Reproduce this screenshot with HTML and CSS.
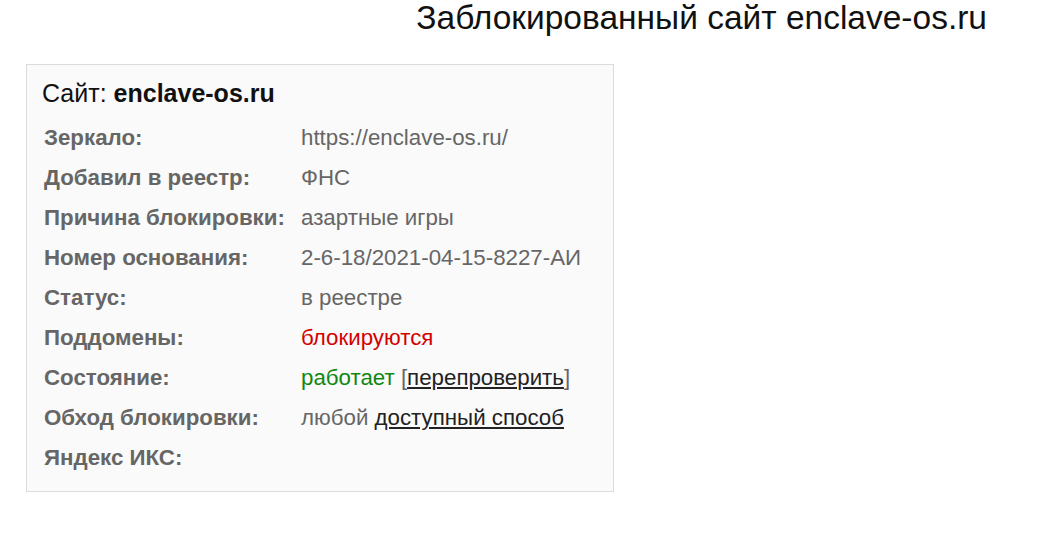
FILE: index.html
```html
<!DOCTYPE html>
<html lang="ru">
<head>
<meta charset="utf-8">
<link rel="stylesheet" href="styles.css">
</head>
<body>
<h1 class="title">Заблокированный сайт enclave-os.ru</h1>
<div class="card">
  <div class="card-head">Сайт: <b>enclave-os.ru</b></div>
  <div class="rows">
    <div class="label">Зеркало:</div><div class="value">https://enclave-os.ru/</div>
    <div class="label">Добавил в реестр:</div><div class="value">ФНС</div>
    <div class="label">Причина блокировки:</div><div class="value">азартные игры</div>
    <div class="label">Номер основания:</div><div class="value">2-6-18/2021-04-15-8227-АИ</div>
    <div class="label">Статус:</div><div class="value">в реестре</div>
    <div class="label">Поддомены:</div><div class="value red">блокируются</div>
    <div class="label">Состояние:</div><div class="value"><span class="green">работает</span> [<a class="link" href="#">перепроверить</a>]</div>
    <div class="label">Обход блокировки:</div><div class="value">любой <a class="link" href="#">доступный способ</a></div>
    <div class="label">Яндекс ИКС:</div><div class="value"></div>
  </div>
</div>
</body>
</html>
```
FILE: styles.css
```css
html, body { margin: 0; padding: 0; background: #fff; }
body { font-family: "Liberation Sans", Arial, sans-serif; color: #000; }
.title {
  margin: 0;
  padding: 0 53px 0 0;
  height: 40px;
  line-height: 36px;
  text-align: right;
  font-size: 33.5px;
  font-weight: normal;
  color: #111;
}
.card {
  margin: 24px 0 0 26px;
  width: 586px;
  height: 426px;
  background: #fafafa;
  border: 1px solid #dcdcdc;
}
.card-head {
  padding: 12px 0 0 15px;
  height: 41px;
  line-height: 32px;
  font-size: 25px;
  color: #111;
}
.card-head b { font-weight: bold; }
.rows {
  display: grid;
  grid-template-columns: 257px 1fr;
  grid-auto-rows: 40px;
  padding-left: 17px;
  font-size: 22.3px;
  line-height: 40px;
}
.label { font-weight: bold; color: #666; }
.value { color: #666; }
.red { color: #d40000; }
.green { color: #118811; }
.link { color: #222; text-decoration: underline; }
```
